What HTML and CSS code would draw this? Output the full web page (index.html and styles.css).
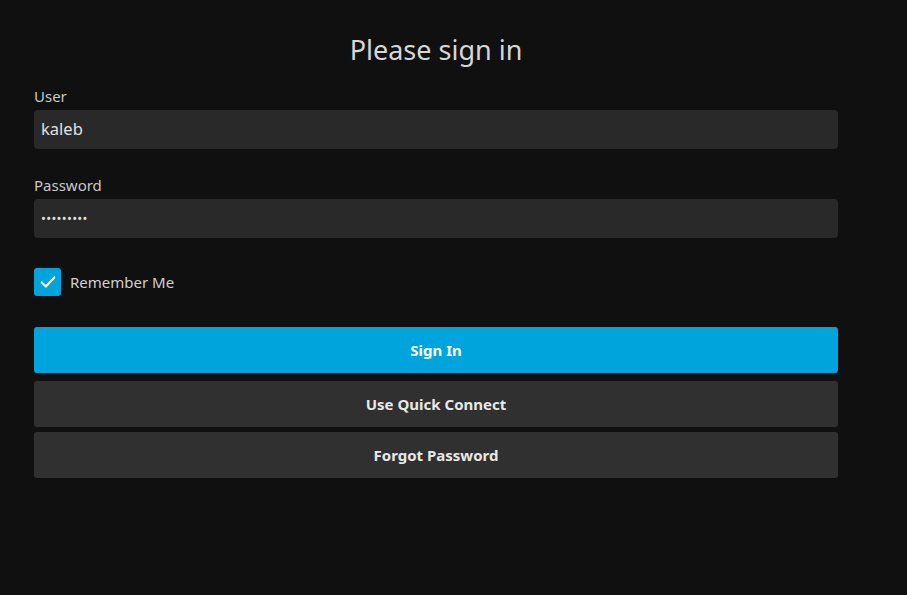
FILE: index.html
```html
<!DOCTYPE html>
<html>
<head>
<meta charset="utf-8">
<link rel="stylesheet" href="styles.css">
</head>
<body>
<div class="page">
  <h1 class="title">Please sign in</h1>
  <form class="form">
    <label class="field">
      <span class="label">User</span>
      <span class="input">kaleb</span>
    </label>
    <label class="field field-pw">
      <span class="label">Password</span>
      <span class="input pw">•••••••••</span>
    </label>
    <div class="check-row">
      <span class="checkbox">
        <svg width="20" height="20" viewBox="0 0 24 24"><path d="M4.5 12.5l5 5L19.5 6.5" fill="none" stroke="#fff" stroke-width="2.6" stroke-linecap="round" stroke-linejoin="round"/></svg>
      </span>
      <span class="check-label">Remember Me</span>
    </div>
    <div class="buttons">
      <div class="btn btn-primary">Sign In</div>
      <div class="btn btn-secondary btn-qc">Use Quick Connect</div>
      <div class="btn btn-secondary btn-fp">Forgot Password</div>
    </div>
  </form>
</div>
</body>
</html>
```
FILE: styles.css
```css
html, body {
  margin: 0;
  padding: 0;
  background: #101010;
  height: 100%;
}
body {
  font-family: "Noto Sans", sans-serif;
  color: #d8d8d8;
}
.page {
  width: 804px;
  padding: 0 0 0 34px;
}
.title {
  margin: 0;
  padding-top: 32px;
  text-align: center;
  font-size: 27px;
  font-weight: 400;
  line-height: 36px;
  color: #d6d6d6;
}
.form {
  display: flex;
  flex-direction: column;
  margin-top: 18px;
}
.field {
  display: flex;
  flex-direction: column;
}
.field-pw {
  margin-top: 26px;
}
.label {
  font-size: 15px;
  line-height: 20px;
  color: #c8c8c8;
  margin-bottom: 4px;
}
.input {
  display: block;
  height: 39px;
  line-height: 38px;
  background: #292929;
  border-radius: 4px;
  padding: 0 7px;
  font-size: 16.5px;
  color: #e0e0e0;
  box-sizing: border-box;
}
.pw {
  font-size: 13px;
  letter-spacing: 0.3px;
  line-height: 39px;
}
.check-row {
  display: flex;
  align-items: center;
  margin-top: 30px;
  height: 28px;
}
.checkbox {
  width: 27px;
  height: 28px;
  background: #00a4dc;
  border-radius: 3px;
  display: flex;
  align-items: center;
  justify-content: center;
}
.check-label {
  margin-left: 9px;
  font-size: 15px;
  color: #d0d0d0;
}
.buttons {
  display: flex;
  flex-direction: column;
  margin-top: 31px;
}
.btn {
  height: 46px;
  border-radius: 3px;
  display: flex;
  align-items: center;
  justify-content: center;
  font-size: 15px;
  font-weight: 700;
  color: #e8e8e8;
}
.btn-primary {
  background: #00a4dc;
  color: #ffffff;
}
.btn-secondary {
  background: #303030;
}
.btn-qc {
  margin-top: 8px;
}
.btn-fp {
  margin-top: 5px;
}
```
